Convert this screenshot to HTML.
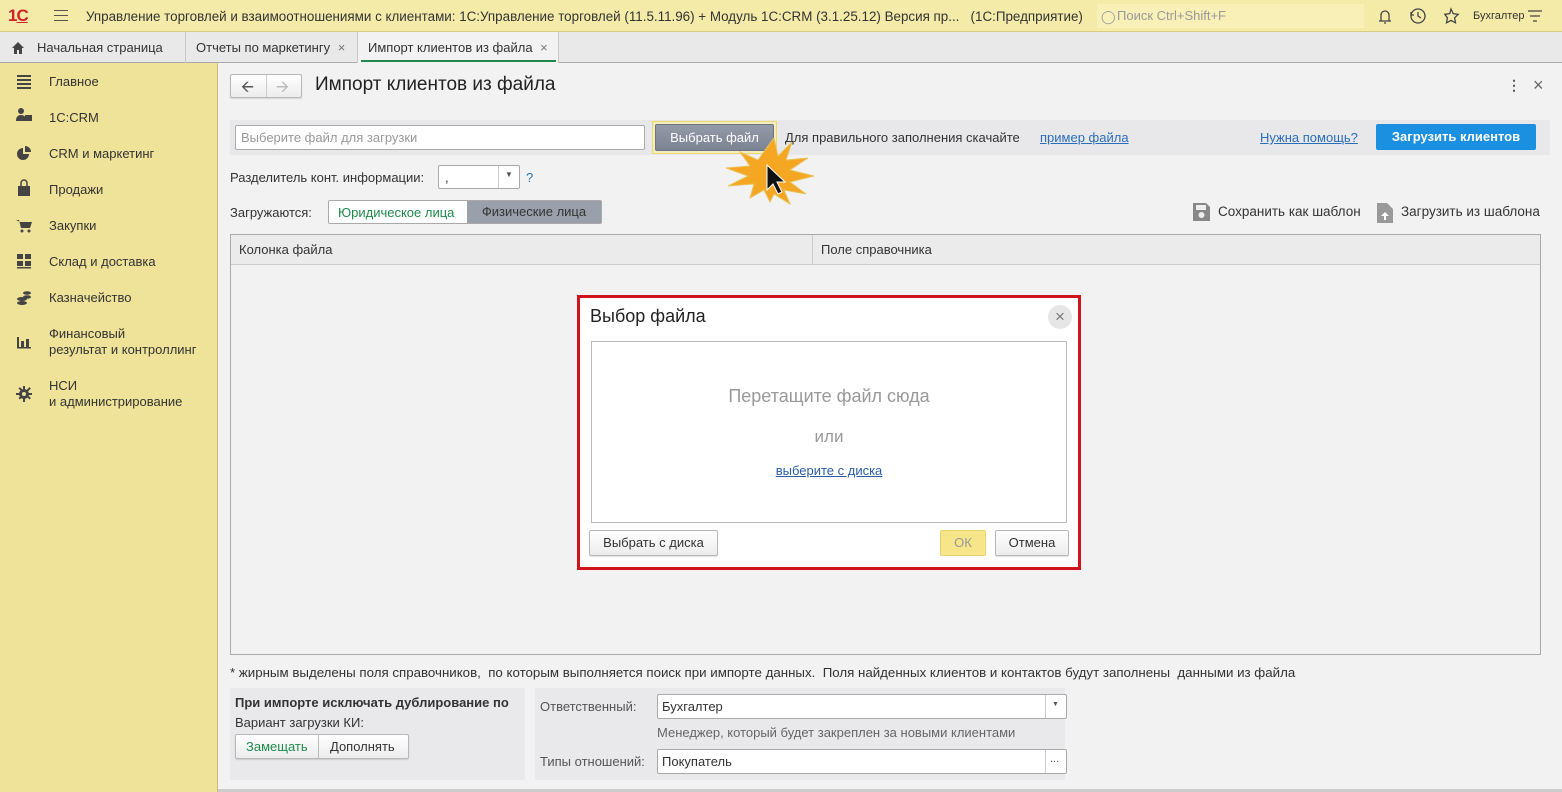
<!DOCTYPE html>
<html><head><meta charset="utf-8"><style>
*{margin:0;padding:0;box-sizing:border-box}
body{width:1562px;height:792px;overflow:hidden;font-family:"Liberation Sans",sans-serif;font-size:13px;color:#333;background:#f2f2f3;position:relative}
.a{position:absolute}
.top{left:0;top:0;width:1562px;height:32px;background:#f5eba9;border-bottom:1px solid #d8cd84}
.tabs{left:0;top:32px;width:1562px;height:31px;background:#e9e9e9;border-bottom:1px solid #aaa}
.tab{top:0;height:31px;line-height:31px;font-size:13px;color:#333;border-right:1px solid #c8c8c8;padding:0 10px}
.side{left:0;top:63px;width:218px;height:729px;background:#efe399;border-right:1px solid #c9bd6a}
.si{left:49px;font-size:13px;color:#333;line-height:16px}
.btn{border:1px solid #b8b8b8;border-radius:2px;background:linear-gradient(#fff,#ececec);text-align:center;color:#333;box-shadow:0 1px 1px rgba(0,0,0,.12)}
.inp{border:1px solid #aaa;border-radius:2px;background:#fff}
u{text-decoration:underline}
</style></head><body>
<div class="a top"></div>
<div class="a" style="left:8px;top:6px;color:#d2232a;font-weight:bold;font-size:17px;letter-spacing:-1px">1<span style="text-decoration:underline">C</span></div>
<div class="a" style="left:54px;top:10px;width:14px;height:11px;border-top:1.5px solid #555;border-bottom:1.5px solid #555"><div style="margin-top:3.5px;border-top:1.5px solid #555"></div></div>
<div class="a" style="left:86px;top:9px;font-size:13.4px;color:#333">Управление торговлей и взаимоотношениями с клиентами: 1С:Управление торговлей (11.5.11.96) + Модуль 1С:CRM (3.1.25.12) Версия пр...&nbsp;&nbsp;&nbsp;(1С:Предприятие)</div>
<div class="a" style="left:1097px;top:4px;width:267px;height:24px;background:#f9f0b8"></div>
<div class="a" style="left:1101px;top:9px;font-size:13px;color:#999">&#9711;</div>
<div class="a" style="left:1117px;top:8px;font-size:13px;color:#999">Поиск Ctrl+Shift+F</div>
<svg class="a" style="left:1376px;top:7px" width="170" height="18" viewBox="0 0 170 18" fill="none" stroke="#444" stroke-width="1.3">
<path d="M3 14h12M5 14V8a4 4 0 0 1 8 0v6M8 16h2"/>
<circle cx="42" cy="9" r="7"/><path d="M42 5v4l3 2M35 5l0 3 3 0"/>
<path d="M75 2l2.2 4.6 5 .7-3.6 3.5.9 5-4.5-2.4-4.5 2.4.9-5L68.8 7.3l5-.7z"/>
<path d="M152 4h14M154 9h10M157 14h4"/>
</svg>
<div class="a" style="left:1473px;top:10px;font-size:11px;color:#333">Бухгалтер</div>

<div class="a tabs"></div>
<div class="a tab" style="left:0;width:186px;padding-left:37px;top:32px">Начальная страница</div>
<svg class="a" style="left:11px;top:41px" width="14" height="13"><path d="M7 1L1 7h2v6h3V9h2v4h3V7h2z" fill="#444"/></svg>
<div class="a tab" style="left:186px;width:172px;top:32px">Отчеты по маркетингу <span style="color:#777;margin-left:4px">×</span></div>
<div class="a tab" style="left:358px;width:201px;top:32px;background:#f2f2f3">Импорт клиентов из файла <span style="color:#777;margin-left:4px">×</span></div>
<div class="a" style="left:361px;top:60px;width:195px;height:2px;background:#1e8a4c"></div>

<div class="a side"></div>
<div class="a si" style="top:74px">Главное</div>
<div class="a si" style="top:110px">1С:CRM</div>
<div class="a si" style="top:146px">CRM и маркетинг</div>
<div class="a si" style="top:182px">Продажи</div>
<div class="a si" style="top:218px">Закупки</div>
<div class="a si" style="top:254px">Склад и доставка</div>
<div class="a si" style="top:290px">Казначейство</div>
<div class="a si" style="top:326px">Финансовый<br>результат и контроллинг</div>
<div class="a si" style="top:378px">НСИ<br>и администрирование</div>
<svg class="a" style="left:16px;top:73px" width="20" height="340" fill="#444">
<rect x="1" y="2" width="14" height="2"/><rect x="1" y="6" width="14" height="2"/><rect x="1" y="10" width="14" height="2"/><rect x="1" y="14" width="14" height="2"/>
<circle cx="5" cy="38" r="3"/><path d="M0 48q0-6 5-6t5 6z"/><rect x="9" y="42" width="7" height="6"/>
<path d="M7 75a6 6 0 1 0 6 6h-6z"/><path d="M9 73v6h6a6 6 0 0 0-6-6z"/>
<path d="M2 113h12v10H2z"/><path d="M5 113v-3a3 3 0 0 1 6 0v3" fill="none" stroke="#444" stroke-width="1.5"/>
<path d="M0 147h3l2 8h9l2-6H4" /><circle cx="6" cy="158" r="1.5"/><circle cx="13" cy="158" r="1.5"/>
<rect x="1" y="181" width="6" height="5"/><rect x="9" y="181" width="6" height="5"/><rect x="1" y="188" width="6" height="5"/><rect x="9" y="188" width="6" height="5"/><rect x="1" y="194" width="14" height="1.5"/>
<ellipse cx="6" cy="226" rx="5" ry="2"/><ellipse cx="6" cy="230" rx="5" ry="2"/><ellipse cx="11" cy="220" rx="4" ry="1.8"/><ellipse cx="11" cy="224" rx="4" ry="1.8"/>
<rect x="1" y="264" width="2" height="11"/><rect x="5" y="268" width="3" height="7"/><rect x="10" y="266" width="3" height="9"/><rect x="1" y="274" width="14" height="1.5"/>
<circle cx="8" cy="321" r="5"/><path d="M7 313h2v16H7zM0 320h16v2H0zM2.5 315.5l11 11 1.4-1.4-11-11zM13.5 314.1l-11 11 1.4 1.4 11-11z"/><circle cx="8" cy="321" r="2" fill="#efe399"/>
</svg>

<div class="a btn" style="left:230px;top:74px;width:72px;height:24px"></div>
<div class="a" style="left:266px;top:75px;width:1px;height:22px;background:#ccc"></div>
<div class="a" style="left:241px;top:76px;font-size:16px;color:#555">&#129128;</div>
<div class="a" style="left:276px;top:76px;font-size:16px;color:#bbb">&#129130;</div>
<div class="a" style="left:315px;top:74px;font-size:19px;color:#222">Импорт клиентов из файла</div>
<div class="a" style="left:1507px;top:77px;font-size:14px;color:#555;font-weight:bold">⋮</div>
<div class="a" style="left:1533px;top:75px;font-size:18px;color:#666">×</div>

<div class="a" style="left:230px;top:120px;width:1320px;height:35px;background:#e8e8ea"></div>
<div class="a inp" style="left:235px;top:125px;width:410px;height:25px"></div>
<div class="a" style="left:241px;top:130px;color:#999">Выберите файл для загрузки</div>
<div class="a" style="left:652px;top:121px;width:125px;height:33px;border:1px solid #f0d76a;background:#f3eebd"></div>
<div class="a" style="left:655px;top:124px;width:119px;height:27px;background:linear-gradient(#939aa8,#7c8392);border:1px solid #6d7382;border-radius:2px;color:#fff;text-align:center;line-height:25px">Выбрать файл</div>
<div class="a" style="left:785px;top:130px">Для правильного заполнения скачайте</div>
<div class="a" style="left:1040px;top:130px;color:#2a6ebb"><u>пример файла</u></div>
<div class="a" style="left:1260px;top:130px;color:#2a6ebb"><u>Нужна помощь?</u></div>
<div class="a" style="left:1376px;top:124px;width:160px;height:26px;background:#1b8fe0;border-radius:2px;color:#fff;font-weight:bold;text-align:center;line-height:26px">Загрузить клиентов</div>
<svg class="a" style="left:722px;top:135px" width="95" height="70" viewBox="0 0 95 70">
<path d="M52 3l4 18 14-14-6 18 22-2-18 12 24 6-24 6 16 12-22-4 6 14-16-10-4 8-6-12-14 8 4-14-26 2 20-10-22-8 24-2-10-14 18 8z" fill="#f5a623" stroke="#e8c45a" stroke-width="1"/>
<path d="M45 30l0 25 6-6 5 10 4-2-5-10 8 0z" fill="#111" stroke="#fff" stroke-width="1"/>
</svg>

<div class="a" style="left:230px;top:170px">Разделитель конт. информации:</div>
<div class="a inp" style="left:438px;top:165px;width:82px;height:24px"></div>
<div class="a" style="left:498px;top:166px;width:1px;height:22px;background:#ccc"></div>
<div class="a" style="left:445px;top:170px">,</div>
<div class="a" style="left:505px;top:170px;font-size:8px;color:#555">▼</div>
<div class="a" style="left:526px;top:170px;color:#2a6ebb">?</div>
<div class="a" style="left:230px;top:205px">Загружаются:</div>
<div class="a" style="left:328px;top:200px;width:274px;height:24px;border:1px solid #aaa;border-radius:2px;background:#fff"></div>
<div class="a" style="left:338px;top:205px;color:#1e8a4c">Юридическое лица</div>
<div class="a" style="left:467px;top:201px;width:134px;height:22px;background:#9aa0ab;text-align:center;line-height:22px;color:#333">Физические лица</div>
<svg class="a" style="left:1192px;top:202px" width="20" height="22"><path d="M1 1h13l4 4v14H1z" fill="#888"/><rect x="4" y="3" width="10" height="5" fill="#eee"/><circle cx="9.5" cy="13" r="3" fill="#eee"/></svg>
<div class="a" style="left:1218px;top:204px;font-size:13.5px">Сохранить как шаблон</div>
<svg class="a" style="left:1376px;top:202px" width="18" height="22"><path d="M1 1h10l6 6v14H1z" fill="#999"/><path d="M9 10l-4 4h3v4h2v-4h3z" fill="#fff"/></svg>
<div class="a" style="left:1401px;top:204px;font-size:13.5px">Загрузить из шаблона</div>

<div class="a" style="left:230px;top:234px;width:1311px;height:421px;border:1px solid #aaa;background:#f2f2f3"></div>
<div class="a" style="left:231px;top:235px;width:1309px;height:30px;background:#ebebec;border-bottom:1px solid #ccc"></div>
<div class="a" style="left:812px;top:235px;width:1px;height:30px;background:#ccc"></div>
<div class="a" style="left:239px;top:242px">Колонка файла</div>
<div class="a" style="left:821px;top:242px">Поле справочника</div>

<div class="a" style="left:577px;top:295px;width:504px;height:275px;border:3px solid #d0141e;background:#fff"></div>
<div class="a" style="left:590px;top:306px;font-size:18px;color:#222">Выбор файла</div>
<div class="a" style="left:1048px;top:305px;width:24px;height:24px;border-radius:50%;background:#e6e6e6;text-align:center;line-height:23px;color:#777;font-size:17px">×</div>
<div class="a" style="left:591px;top:341px;width:476px;height:182px;border:1px solid #bbb"></div>
<div class="a" style="left:591px;top:386px;width:476px;text-align:center;font-size:18px;color:#999">Перетащите файл сюда</div>
<div class="a" style="left:591px;top:427px;width:476px;text-align:center;font-size:17px;color:#999">или</div>
<div class="a" style="left:591px;top:463px;width:476px;text-align:center;color:#2a5ea8"><u>выберите с диска</u></div>
<div class="a btn" style="left:589px;top:530px;width:129px;height:26px;line-height:24px">Выбрать с диска</div>
<div class="a" style="left:940px;top:530px;width:46px;height:26px;background:#f7e58a;border:1px solid #e8d46b;border-radius:2px;text-align:center;line-height:24px;color:#999">ОК</div>
<div class="a btn" style="left:995px;top:530px;width:74px;height:26px;line-height:24px">Отмена</div>

<div class="a" style="left:230px;top:665px;font-size:13.3px">* жирным выделены поля справочников,&nbsp; по которым выполняется поиск при импорте данных.&nbsp; Поля найденных клиентов и контактов будут заполнены&nbsp; данными из файла</div>
<div class="a" style="left:230px;top:688px;width:295px;height:92px;background:#e9e9eb"></div>
<div class="a" style="left:235px;top:695px;font-weight:bold">При импорте исключать дублирование по</div>
<div class="a" style="left:235px;top:715px">Вариант загрузки КИ:</div>
<div class="a btn" style="left:235px;top:734px;width:174px;height:25px"></div>
<div class="a" style="left:318px;top:735px;width:1px;height:23px;background:#bbb"></div>
<div class="a" style="left:246px;top:739px;color:#1e8a4c">Замещать</div>
<div class="a" style="left:330px;top:739px">Дополнять</div>
<div class="a" style="left:535px;top:688px;width:530px;height:92px;background:#e9e9eb"></div>
<div class="a" style="left:540px;top:699px;color:#555">Ответственный:</div>
<div class="a inp" style="left:657px;top:694px;width:410px;height:25px"></div>
<div class="a" style="left:1045px;top:695px;width:1px;height:23px;background:#ccc"></div>
<div class="a" style="left:662px;top:699px">Бухгалтер</div>
<div class="a" style="left:1052px;top:701px;font-size:7px;color:#555">▼</div>
<div class="a" style="left:657px;top:725px;color:#666">Менеджер, который будет закреплен за новыми клиентами</div>
<div class="a" style="left:540px;top:754px;color:#555">Типы отношений:</div>
<div class="a inp" style="left:657px;top:749px;width:410px;height:25px"></div>
<div class="a" style="left:1045px;top:750px;width:1px;height:23px;background:#ccc"></div>
<div class="a" style="left:662px;top:754px">Покупатель</div>
<div class="a" style="left:1050px;top:753px;font-size:11px;color:#555">...</div>
<div class="a" style="left:218px;top:789px;width:1344px;height:3px;background:#ccc"></div>
</body></html>
